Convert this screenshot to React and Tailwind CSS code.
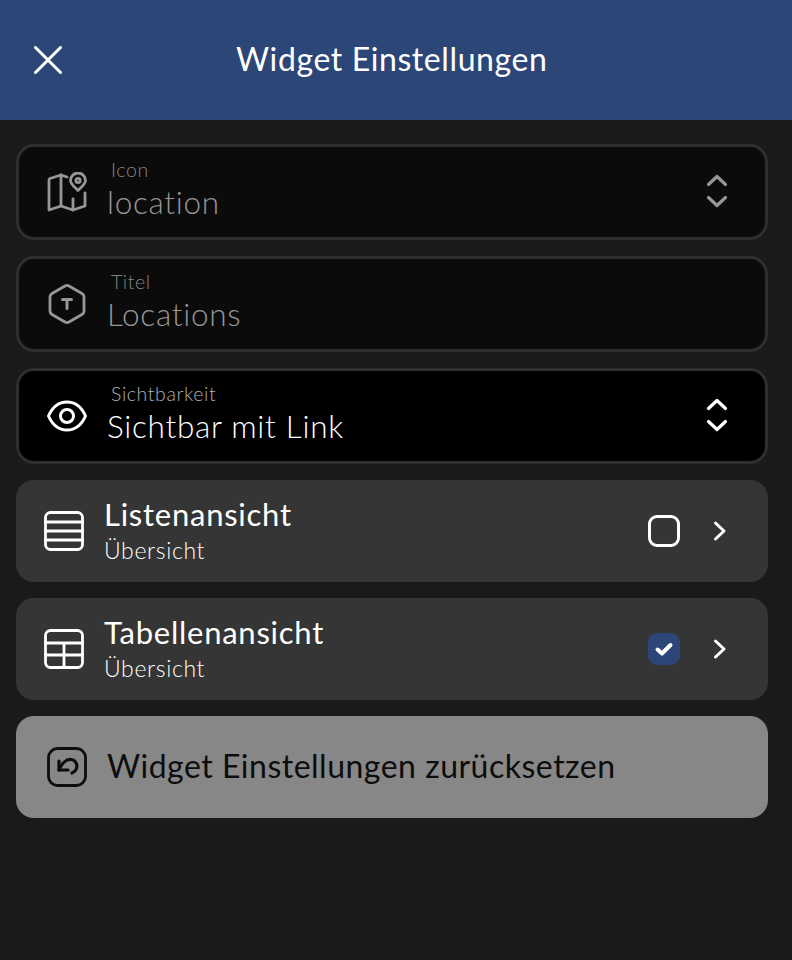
import React from 'react';

const FONT = "font-['Lato','Noto_Sans',sans-serif]";

function Chevrons({ className }) {
    return (
        <svg viewBox="0 0 24 36" className={`w-6 h-9 ${className}`} fill="none" stroke="currentColor" strokeWidth="3.2" strokeLinecap="round" strokeLinejoin="round">
            <path d="M3.5 10.5 12 2.5l8.5 8" />
            <path d="M3.5 23.5 12 31.5l8.5-8" />
        </svg>
    );
}

function MapIcon() {
    return (
        <svg viewBox="0 0 40 40" className="w-10 h-10" fill="none" stroke="currentColor" strokeWidth="2.8" strokeLinecap="round" strokeLinejoin="round">
            <path d="M14 3 3 6.500a1.500 1.500 0 0 0-1 1.400V38l12-4 12 4 12-4V21" />
            <path d="M14 3l6 2M14 3v31M26 27v11" />
            <path d="M31 18.500C27 14.500 23.500 12 23.500 8.500a7.500 7.500 0 0 1 15 0c0 3.500-3.500 6-7.500 10Z" />
            <circle cx="31" cy="8.500" r="2.200" />
        </svg>
    );
}

function HexIcon() {
    return (
        <svg viewBox="0 0 40 40" className="w-10 h-10" fill="none" stroke="currentColor" strokeLinecap="round" strokeLinejoin="round">
            <path strokeWidth="2.800" d="M18 2a4 4 0 0 1 4 0l13 7.500a4 4 0 0 1 2 3.400v14.200a4 4 0 0 1-2 3.400L22 38a4 4 0 0 1-4 0L5 30.500a4 4 0 0 1-2-3.400V12.900a4 4 0 0 1 2-3.400Z" />
            <path strokeWidth="3" d="M15.500 15.500h9M20 15.500v9" />
        </svg>
    );
}

function EyeIcon() {
    return (
        <svg viewBox="0 0 40 32" className="w-10 h-8" fill="none" stroke="currentColor" strokeWidth="3" strokeLinecap="round" strokeLinejoin="round">
            <path d="M1.500 16C5.500 7 12 2 20 2s14.500 5 18.500 14C34.500 25 28 30 20 30S5.500 25 1.500 16Z" />
            <circle cx="20" cy="16" r="6.500" />
        </svg>
    );
}

function ListIcon() {
    return (
        <svg viewBox="0 0 40 40" className="w-10 h-10" fill="none" stroke="currentColor" strokeWidth="2.800" strokeLinecap="round" strokeLinejoin="round">
            <rect x="1.500" y="1.500" width="37" height="37" rx="5" />
            <path d="M1.500 11h37M1.500 20h37M1.500 29h37" />
        </svg>
    );
}

function TableIcon() {
    return (
        <svg viewBox="0 0 40 40" className="w-10 h-10" fill="none" stroke="currentColor" strokeWidth="2.800" strokeLinecap="round" strokeLinejoin="round">
            <rect x="1.500" y="1.500" width="37" height="37" rx="5" />
            <path d="M1.500 14h37M1.500 26h37M20 14v24.500" />
        </svg>
    );
}

function ResetIcon() {
    return (
        <svg viewBox="0 0 40 40" className="w-10 h-10" fill="none" stroke="currentColor" strokeLinecap="round" strokeLinejoin="round">
            <rect x="1.500" y="1.500" width="37" height="37" rx="9" strokeWidth="2.800" />
            <path strokeWidth="3.200" d="M12 14v9h9" />
            <path strokeWidth="3.200" d="M12 23c2.500-6 7-11 12-10.500 6 .6 7.500 8 4 11.500l-3 2" />
        </svg>
    );
}

function Field({ icon, label, value, chevrons, active }) {
    const tone = active ? 'text-white' : 'text-[#979797]';
    return (
        <div className={`flex items-center h-24 rounded-[18px] border-[3px] border-[#2e2e2e] pl-[28px] pr-[36px] ${active ? 'bg-black' : 'bg-[#0b0b0b]'}`}>
            <div className={`w-10 flex items-center justify-center shrink-0 ${tone}`}>{icon}</div>
            <div className="ml-[20px] -mt-[5px] flex-1 flex flex-col">
                <span className={`ml-[4px] text-[19.500px] leading-[22px] font-light tracking-[0.6px] ${active ? 'text-[#b0b0b0]' : 'text-[#858585]'}`}>{label}</span>
                <span className={`mt-[2px] text-[31.500px] leading-[38px] font-light tracking-[0.7px] ${tone}`}>{value}</span>
            </div>
            {chevrons && <Chevrons className={tone} />}
        </div>
    );
}

function ViewRow({ icon, title, checked }) {
    return (
        <div className="flex items-center h-[102px] rounded-[18px] bg-[#353535] pl-[28px] pr-[40px] text-white">
            <div className="w-10 shrink-0">{icon}</div>
            <div className="ml-[20px] -mt-[2px] flex-1 flex flex-col">
                <span className="text-[31px] leading-[36px] tracking-[0.75px]">{title}</span>
                <span className="mt-[4px] text-[23px] leading-[28px] font-light tracking-[0.65px]">Übersicht</span>
            </div>
            {checked ? (
                <div className="w-8 h-8 rounded-[9px] bg-[#2c4777] flex items-center justify-center">
                    <svg viewBox="0 0 20 20" className="w-5 h-5" fill="none" stroke="white" strokeWidth="4" strokeLinecap="round" strokeLinejoin="round">
                        <path d="M3.500 10.500 8 14.500l8.500-8.500" />
                    </svg>
                </div>
            ) : (
                <div className="w-8 h-8 rounded-[9px] border-[3px] border-white" />
            )}
            <svg viewBox="0 0 14 22" className="ml-[33px] mr-[1px] w-[14px] h-[22px]" fill="none" stroke="white" strokeWidth="3" strokeLinecap="round" strokeLinejoin="round">
                <path d="M2.500 3 11 11l-8.500 8" />
            </svg>
        </div>
    );
}

export default function App() {
    return (
        <div className={`w-[792px] h-[960px] bg-[#1a1a1a] ${FONT}`}>
            <header className="flex items-center h-[120px] bg-[#2c4777] pl-[34px]">
                <svg viewBox="0 0 28 28" className="w-7 h-7" fill="none" stroke="white" strokeWidth="3" strokeLinecap="round">
                    <path d="M1.500 1.500l25 25M26.500 1.500l-25 25" />
                </svg>
                <h1 className="ml-[174px] -mt-[2px] text-[32px] leading-10 font-normal tracking-[0.6px] text-white">Widget Einstellungen</h1>
            </header>
            <main className="flex flex-col gap-4 pl-4 pr-6 pt-6">
                <Field icon={<MapIcon />} label="Icon" value="location" chevrons />
                <Field icon={<HexIcon />} label="Titel" value="Locations" />
                <Field icon={<EyeIcon />} label="Sichtbarkeit" value="Sichtbar mit Link" chevrons active />
                <ViewRow icon={<ListIcon />} title="Listenansicht" />
                <ViewRow icon={<TableIcon />} title="Tabellenansicht" checked />
                <div className="flex items-center h-[102px] rounded-[18px] bg-[#878787] pl-[31px] text-[#0d0d0d]">
                    <ResetIcon />
                    <span className="ml-5 -mt-[2px] text-[32px] leading-10 tracking-[0.5px]">Widget Einstellungen zurücksetzen</span>
                </div>
            </main>
        </div>
    );
}
